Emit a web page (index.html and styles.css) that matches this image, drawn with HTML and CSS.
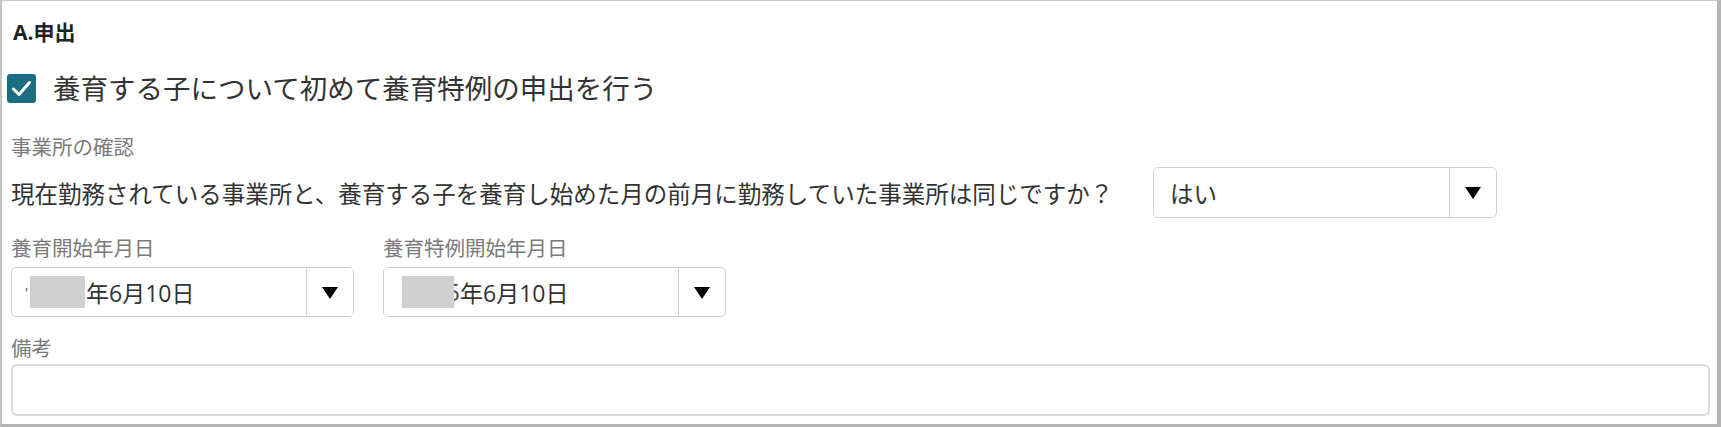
FILE: index.html
```html
<!DOCTYPE html>
<html lang="ja">
<head>
<meta charset="utf-8">
<title>A.申出</title>
<link rel="stylesheet" href="styles.css">
</head>
<body>
<div class="panel">
  <div class="title">A.申出</div>

  <label class="check-row">
    <svg class="checkbox" width="29" height="29" viewBox="0 0 29 29" aria-hidden="true">
      <rect x="0" y="0" width="29" height="29" rx="3" fill="#1b6e80"/>
      <polyline points="6.5,15 12,20.5 22.5,8.5" fill="none" stroke="#fff" stroke-width="3" stroke-linecap="round" stroke-linejoin="round"/>
    </svg>
    <span class="check-label">養育する子について初めて養育特例の申出を行う</span>
  </label>

  <div class="label first-label">事業所の確認</div>
  <div class="question-row">
    <span class="question">現在勤務されている事業所と、養育する子を養育し始めた月の前月に勤務していた事業所は同じですか？</span>
    <div class="select select-yes">
      <span class="select-value">はい</span>
      <span class="select-arrow">
        <svg width="16" height="12" viewBox="0 0 16 12" aria-hidden="true"><polygon points="0,0 16,0 8,12" fill="#000"/></svg>
      </span>
    </div>
  </div>

  <div class="date-row">
    <div class="date-group">
      <div class="label">養育開始年月日</div>
      <div class="select select-date">
        <span class="select-value"><span class="remnant">'</span><span class="redact"></span>年6月10日</span>
        <span class="select-arrow">
          <svg width="16" height="12" viewBox="0 0 16 12" aria-hidden="true"><polygon points="0,0 16,0 8,12" fill="#000"/></svg>
        </span>
      </div>
    </div>
    <div class="date-group">
      <div class="label">養育特例開始年月日</div>
      <div class="select select-date">
        <span class="select-value"><span class="redact-wrap">5<span class="redact redact-over"></span></span>年6月10日</span>
        <span class="select-arrow">
          <svg width="16" height="12" viewBox="0 0 16 12" aria-hidden="true"><polygon points="0,0 16,0 8,12" fill="#000"/></svg>
        </span>
      </div>
    </div>
  </div>

  <div class="label note-label">備考</div>
  <textarea class="note" aria-label="備考"></textarea>
</div>
</body>
</html>
```
FILE: styles.css
```css
* {
  box-sizing: border-box;
}

html, body {
  margin: 0;
  padding: 0;
  background: #ffffff;
}

body {
  font-family: "Open Sans", "Noto Sans CJK JP", sans-serif;
  color: #333333;
}

.panel {
  width: 1721px;
  height: 427px;
  border-top: 1px solid #c9c9c9;
  border-left: 2px solid #c4c4c4;
  border-right: 4px solid #b4b4b4;
  border-bottom: 3px solid #b4b4b4;
  padding: 19px 0 0 9px;
  overflow: hidden;
}

.title {
  font-size: 21px;
  font-weight: 700;
  line-height: 24px;
  color: #222222;
  height: 24px;
  padding-left: 2px;
}

.check-row {
  display: flex;
  align-items: center;
  margin-top: 30px;
  margin-left: -4px;
  height: 29px;
}

.checkbox {
  flex: none;
  display: block;
}

.check-label {
  margin-left: 17px;
  font-size: 27.5px;
  line-height: 29px;
  color: #333333;
  white-space: nowrap;
}

.label {
  font-size: 20.5px;
  line-height: 24px;
  height: 24px;
  color: #7a7a7a;
  white-space: nowrap;
}

.first-label {
  margin-top: 32px;
}

.question-row {
  display: flex;
  align-items: center;
  margin-top: 8px;
  height: 51px;
}

.question {
  font-size: 23.5px;
  line-height: 30px;
  color: #333333;
  white-space: nowrap;
  width: 1142px;
  padding-top: 2px;
}

.select {
  display: flex;
  align-items: stretch;
  border: 1.5px solid #d2d2d2;
  border-radius: 5px;
  background: #ffffff;
  height: 51px;
}

.select-yes {
  width: 344px;
}

.select-value {
  flex: 1;
  display: flex;
  align-items: center;
  padding-left: 16px;
  font-size: 23.5px;
  color: #333333;
  white-space: nowrap;
}

.select-arrow {
  flex: none;
  width: 47px;
  border-left: 1.5px solid #d2d2d2;
  display: flex;
  align-items: center;
  justify-content: center;
  padding-top: 1px;
}

.select-arrow svg {
  display: block;
}

.date-row {
  display: flex;
  gap: 29px;
  margin-top: 18px;
}

.date-group {
  display: flex;
  flex-direction: column;
  width: 343px;
}

.date-group .label {
  margin-bottom: 7px;
}

.select-date {
  height: 50px;
}

.select-date .select-value {
  padding-left: 13px;
  font-size: 23px;
}

.remnant {
  color: #555555;
  font-size: 14px;
  width: 5px;
}

.redact {
  display: inline-block;
  width: 55px;
  height: 32px;
  background: #d0d0d0;
  margin-right: 1px;
}

.redact-wrap {
  position: relative;
  display: inline-block;
  width: 58px;
  text-align: right;
  color: #444444;
  margin-left: 5px;
}

.redact-over {
  position: absolute;
  left: 0;
  top: 50%;
  transform: translateY(-50%);
  width: 52px;
  margin: 0;
}

.note-label {
  margin-top: 19px;
}

.note {
  display: block;
  margin-top: 4px;
  width: 1699px;
  height: 52px;
  border: 2px solid #dadada;
  border-radius: 6px;
  resize: none;
  background: #ffffff;
  font-family: inherit;
  outline: none;
}
```
